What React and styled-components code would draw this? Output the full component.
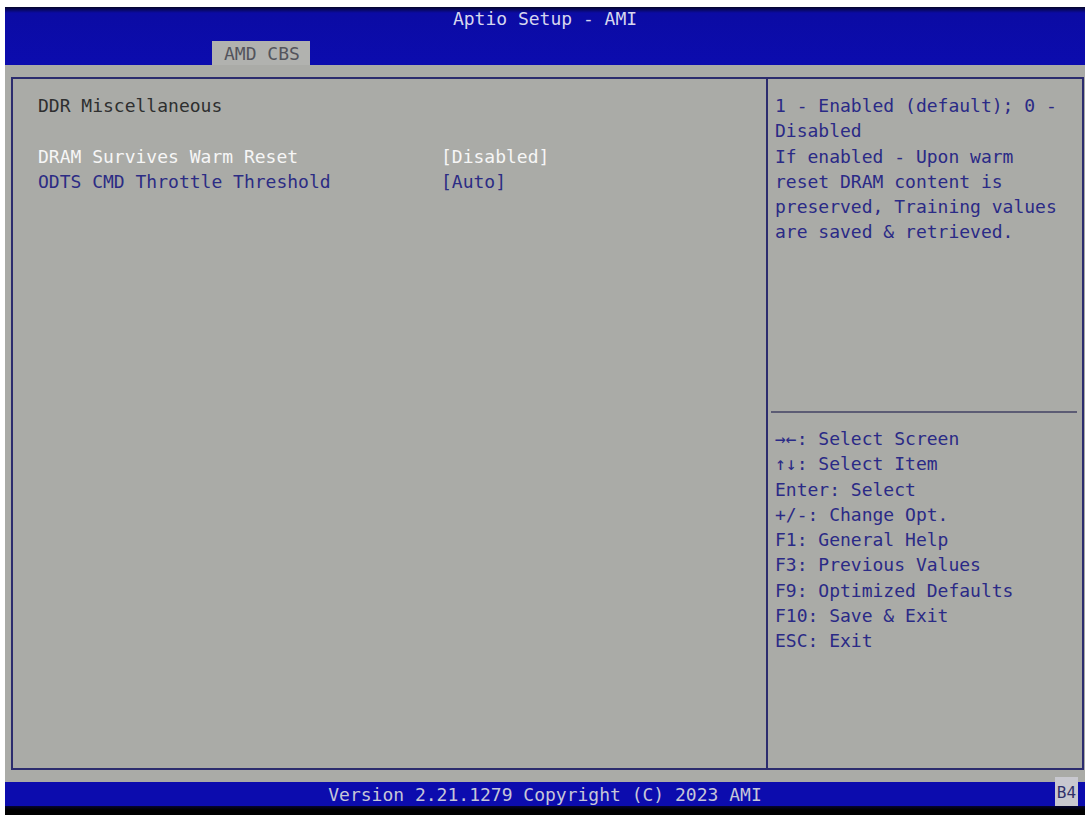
import styled, { createGlobalStyle } from "styled-components";

const GlobalStyle = createGlobalStyle`
  html, body {
    margin: 0;
    padding: 0;
    background: #ffffff;
  }
  body {
    font-family: "DejaVu Sans Mono", "Liberation Mono", monospace;
  }
`;

const Screen = styled.div`
  margin: 7px 2px 0 5px;
  height: 808px;
  display: flex;
  flex-direction: column;
  background: #aaaba7;
  font-size: 18px;
`;

const Header = styled.header`
  flex: none;
  height: 58px;
  display: flex;
  flex-direction: column;
  background: linear-gradient(#06062c 0, #0b0ba4 6px, #0c0cae 100%);
`;

const Title = styled.div`
  padding-top: 2px;
  line-height: 20px;
  text-align: center;
  color: #d6d6ee;
`;

const TabRow = styled.div`
  margin-top: auto;
  display: flex;
  padding-left: 207px;
`;

const Tab = styled.div`
  height: 24px;
  line-height: 26px;
  padding: 0 12px;
  width: 74px;
  background: #b1b2af;
  color: #53545c;
  white-space: pre;
`;

const Body = styled.main`
  flex: 1;
  padding: 12px 1px 12px 6px;
  display: flex;
`;

const Panel = styled.div`
  flex: 1;
  display: grid;
  grid-template-columns: 755px 1fr;
  border: 2px solid #2c2c6e;
`;

const SettingsColumn = styled.section`
  border-right: 2px solid #2c2c6e;
  padding: 14px 0 0 25px;
`;

const Line = styled.div`
  height: 25.3px;
  line-height: 25.3px;
  white-space: pre;
  color: ${(p) => p.color || "#2a2a86"};
`;

const Row = styled.div`
  display: grid;
  grid-template-columns: 403px 1fr;
  height: 25.3px;
  line-height: 25.3px;
  white-space: pre;
  color: ${(p) => (p.selected ? "#f6f6f6" : "#2c2c84")};
`;

const HelpColumn = styled.aside`
  display: flex;
  flex-direction: column;
`;

const HelpTop = styled.div`
  height: 332px;
  box-sizing: border-box;
  padding: 14px 0 0 7px;
`;

const HelpRule = styled.hr`
  margin: 0 5px 0 3px;
  border: 0;
  height: 2px;
  background: #5c5c74;
`;

const HelpKeys = styled.div`
  padding: 13px 0 0 7px;
`;

const Footer = styled.footer`
  flex: none;
  position: relative;
  height: 24px;
  line-height: 25px;
  text-align: center;
  background: #0c0cae;
  color: #c6c6d8;
`;

const Badge = styled.div`
  position: absolute;
  right: 7px;
  bottom: 0;
  width: 23px;
  height: 29px;
  line-height: 31px;
  text-align: center;
  font-size: 16px;
  background: #c8c8cf;
  color: #30306a;
`;

const BottomEdge = styled.div`
  flex: none;
  height: 9px;
  background: linear-gradient(#05052e, #000000 4px);
`;

const settings = [
  { label: "DRAM Survives Warm Reset", value: "[Disabled]", selected: true },
  { label: "ODTS CMD Throttle Threshold", value: "[Auto]" },
];

const helpText = [
  "1 - Enabled (default); 0 -",
  "Disabled",
  "If enabled - Upon warm",
  "reset DRAM content is",
  "preserved, Training values",
  "are saved & retrieved.",
];

const keys = [
  "→←: Select Screen",
  "↑↓: Select Item",
  "Enter: Select",
  "+/-: Change Opt.",
  "F1: General Help",
  "F3: Previous Values",
  "F9: Optimized Defaults",
  "F10: Save & Exit",
  "ESC: Exit",
];

export default function App() {
  return (
    <>
      <GlobalStyle />
      <Screen>
        <Header>
          <Title>Aptio Setup - AMI</Title>
          <TabRow>
            <Tab>AMD CBS</Tab>
          </TabRow>
        </Header>
        <Body>
          <Panel>
            <SettingsColumn>
              <Line color="#2e2f2f">DDR Miscellaneous</Line>
              <Line />
              {settings.map((s) => (
                <Row key={s.label} selected={s.selected}>
                  <span>{s.label}</span>
                  <span>{s.value}</span>
                </Row>
              ))}
            </SettingsColumn>
            <HelpColumn>
              <HelpTop>
                {helpText.map((t) => (
                  <Line key={t}>{t}</Line>
                ))}
              </HelpTop>
              <HelpRule />
              <HelpKeys>
                {keys.map((k) => (
                  <Line key={k}>{k}</Line>
                ))}
              </HelpKeys>
            </HelpColumn>
          </Panel>
        </Body>
        <Footer>
          Version 2.21.1279 Copyright (C) 2023 AMI
          <Badge>B4</Badge>
        </Footer>
        <BottomEdge />
      </Screen>
    </>
  );
}
